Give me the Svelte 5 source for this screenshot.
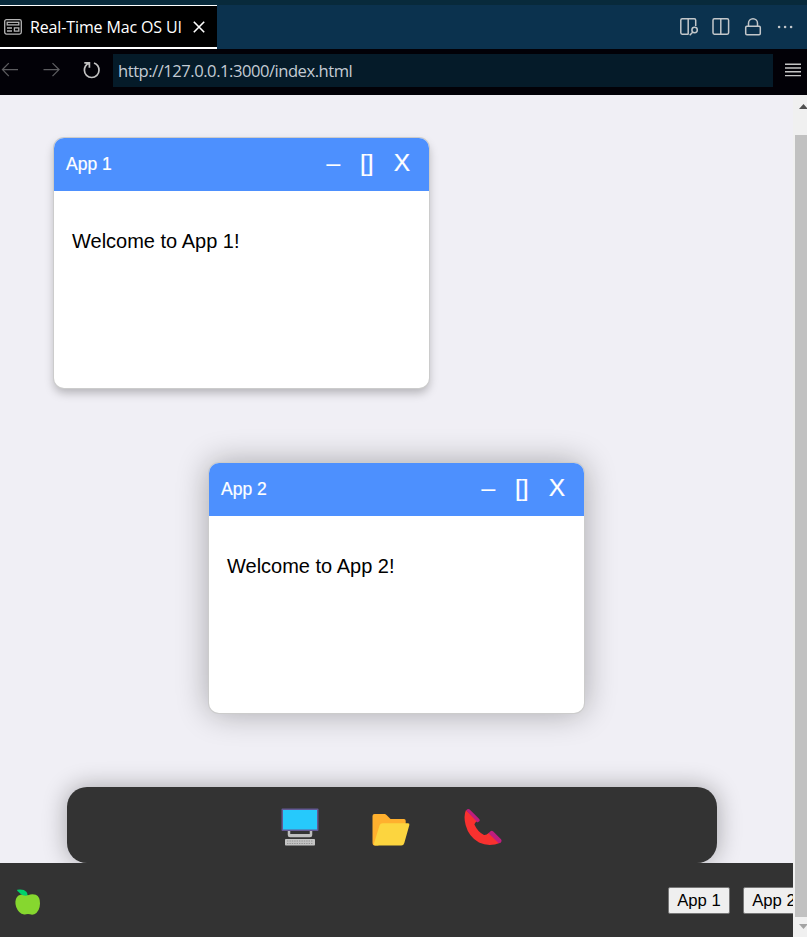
<script>
  const windows = [
    { name: 'App 1', x: 54, y: 43, active: false },
    { name: 'App 2', x: 209, y: 368, active: true }
  ];
</script>

<div class="screen">
  <div class="strip"></div>
  <div class="tabs">
    <div class="tab">
      <svg class="preview" width="18" height="16" viewBox="0 0 18 16" fill="none" stroke="#b5b5b5" stroke-width="1.3">
        <rect x=".7" y=".7" width="16.6" height="14.4" rx="1.8" />
        <rect x="3.2" y="3.3" width="11.6" height="2.6" />
        <path d="M3 9h5M3 12h5" />
        <rect x="10.4" y="8.9" width="4.4" height="3.2" />
      </svg>
      <span class="tab-title">Real-Time Mac OS UI</span>
      <svg class="close" width="12" height="12" viewBox="0 0 12 12" stroke="#fff" stroke-width="1.6"><path d="M.8.8l10.4 10.4M11.2.8L.8 11.2" /></svg>
    </div>
    <div class="actions">
      <svg width="20" height="20" viewBox="0 0 20 20" fill="none" stroke="#c3c7ca" stroke-width="1.5">
        <path d="M9.5 17.2H3.2Q1.8 17.2 1.8 15.8V3.2Q1.8 1.8 3.2 1.8H15.3Q16.7 1.8 16.7 3.2V9M9.2 1.8V17.2M10.7 18.3l3.2-3.4" />
        <circle cx="15.6" cy="13" r="2.7" />
      </svg>
      <svg width="20" height="20" viewBox="0 0 20 20" fill="none" stroke="#c3c7ca" stroke-width="1.5">
        <rect x="2" y="1.8" width="15.6" height="15.4" rx="1.4" /><path d="M9.8 1.8v15.4" />
      </svg>
      <svg width="20" height="20" viewBox="0 0 20 20" fill="none" stroke="#c3c7ca" stroke-width="1.5">
        <rect x="2.7" y="9.2" width="14.6" height="8.6" rx="1.2" /><path d="M5.5 9.2V6.2a4.5 4.5 0 0 1 9 0V9.2" />
      </svg>
      <svg width="20" height="20" viewBox="0 0 20 20" fill="#c3c7ca">
        <circle cx="4.1" cy="10" r="1.3" /><circle cx="10.1" cy="10" r="1.3" /><circle cx="16.1" cy="10" r="1.3" />
      </svg>
    </div>
  </div>

  <div class="nav">
    <svg class="arrows" width="113" height="46" viewBox="0 0 113 46" fill="none" stroke="#5c5c5f" stroke-width="1.3">
      <path d="M18 20.6H3M8.8 14.1L2.5 20.6l6.3 6.5M43.5 20.6h15M52.5 14.1l6.5 6.5-6.5 6.5" />
      <path d="M84.3 13.9h5.1v4.8M88.9 14.3Q84.4 16.4 84.4 21.2A7.3 7.3 0 0 0 99 21.2Q99 16 94 14" stroke="#c2c2c2" stroke-width="1.7" />
    </svg>
    <div class="address"><span>http://127.0.0.1:3000/index.html</span></div>
    <svg class="menu" width="16" height="14" viewBox="0 0 16 14" stroke="#c5c5c5" stroke-width="1.4"><path d="M0 1.2h16M0 5h16M0 8.8h16M0 12.6h16" /></svg>
  </div>

  <div class="viewport">
    <div class="page">
      <div class="desktop">
        {#each windows as win}
          <section class="window" class:active={win.active} style="left: {win.x}px; top: {win.y}px">
            <header>
              <span class="name">{win.name}</span>
              <div class="controls"><span class="minimize">–</span><span class="maximize">[]</span><span class="quit">X</span></div>
            </header>
            <p>Welcome to {win.name}!</p>
          </section>
        {/each}
        <div class="dock">
          <svg width="38" height="38" viewBox="0 0 38 38">
            <rect x=".5" y=".5" width="37" height="22.5" rx="1" fill="#635994" />
            <rect x="2" y="2" width="34" height="19.5" fill="#26c9fc" />
            <path d="M8 23v4q0 1 1 1h20q1 0 1-1v-4" fill="none" stroke="#bebebe" stroke-width="2.5" />
            <path d="M9 26h20v3H9z" fill="#bebebe" />
            <rect x="4" y="31" width="30" height="6.5" rx=".8" fill="#c4c4c4" />
            <path d="M6 33h26M6 35.5h26" stroke="#949494" stroke-width="1" stroke-dasharray="1.4 1" />
          </svg>
          <svg width="38" height="38" viewBox="0 0 38 38">
            <path d="M.5 8Q.5 6 2.5 6h10q1 0 2 1l4 4H32q1.7 0 1.7 1.8V21L6 37.5H2.5Q.5 37.5 .5 34.5z" fill="#ffb02e" />
            <path d="M7.5 17.5q.8-2.2 3-2.2H36q2 0 1.3 2l-5 17.7q-.7 2.5-3 2.5H3q-1.5 0-1-2z" fill="#fcd53f" />
          </svg>
          <svg width="38" height="38" viewBox="0 0 38 38">
            <path d="M2 2Q-.8 8 1.7 17.3Q4.7 28.8 15 34.6Q25 39.4 36.5 34.8L25 24.8Q22 27.5 20 27Q13.5 23.5 10.8 17.2Q9.4 15.5 13.5 12.8z" fill="#f8312f" />
            <path d="M2.2 2.3Q4 .2 5.7 1.5L15 10.8Q16.5 12.2 15 13.5L13.5 14.6zM24.5 25.2L26.5 23.3Q27.8 22 29.3 23.5L37 31.2Q38.3 33 36.6 34.7L34.7 35.3z" fill="#bf1d7e" />
          </svg>
        </div>
      </div>
      <div class="taskbar">
        <svg width="26" height="28" viewBox="0 0 26 28">
          <path d="M13 6.2Q17 4.4 20.8 5.8Q25.2 8 25 14.5Q24.8 22.5 19.3 25.3Q17 26.1 15 25.3Q13 24.7 11 25.3Q7 26.3 4.2 23.1Q0 18.2.4 12.6Q1 6.7 5.6 5.7Q9.5 4.7 13 6.2z" fill="#86d72f" />
          <path d="M2.2.7Q9-.2 11.3 2.7Q12.8 4.2 12.3 6.5Q8 7.2 5.5 4.7Q4 3 2.2 1.7z" fill="#00d26a" />
        </svg>
        <div class="buttons"><button>App 1</button><button>App 2</button></div>
      </div>
    </div>
    <div class="scrollbar">
      <svg class="up" width="12" height="40" viewBox="0 0 12 40"><path d="M4 14l4.5-5 4.5 5z" fill="#505050" /></svg>
      <div class="thumb"></div>
      <svg width="12" height="20" viewBox="0 0 12 20"><path d="M4 7h9l-4.5 5z" fill="#a3a3a3" /></svg>
    </div>
  </div>
</div>

<style>
  :global(body) { margin: 0; }
  .screen { width: 807px; height: 937px; overflow: hidden; display: flex; flex-direction: column; background: #020107; font-family: "Liberation Sans", Arial, sans-serif; }
  svg { display: block; flex: none; }
  .strip { height: 5px; flex: none; background: #082a3b; }
  .tabs { height: 44px; flex: none; display: flex; justify-content: space-between; background: #0b324e; }
  .tab { width: 217px; height: 44px; box-sizing: border-box; border-top: 1px solid #fff; border-bottom: 2px solid #fff; background: #000; display: flex; align-items: center; padding-left: 4px; color: #fff; }
  .tab-title { width: 152px; margin-left: 8px; font: 16px/22px "Open Sans", "Noto Sans", sans-serif; letter-spacing: -.13px; white-space: nowrap; }
  .close { margin-left: 11px; }
  .actions { display: flex; gap: 12px; padding: 12px 12px 0 0; }
  .nav { height: 46px; flex: none; display: flex; background: #020107; }
  .address { width: 660px; height: 33px; margin-top: 5px; background: #051b29; color: #c3cbd4; display: flex; align-items: center; padding-left: 5px; box-sizing: border-box; font: 16.6px/24px "Open Sans", "Noto Sans", sans-serif; letter-spacing: -.48px; }
  .menu { margin: 14px 0 0 12px; }
  .viewport { height: 842px; display: flex; }
  .page { width: 793px; overflow: hidden; background: #f0eff5; flex: none; }
  .desktop { height: 768px; position: relative; display: flex; flex-direction: column; justify-content: flex-end; overflow: hidden; }
  .window { position: absolute; width: 375px; height: 250px; border-radius: 10px; background: #fff; overflow: hidden; box-shadow: 0 0 0 1px #ccc, 0 5px 10px rgba(0,0,0,.25); }
  .window.active { box-shadow: 0 0 0 1px #ccc, 0 0 32px rgba(0,0,0,.32); }
  header { height: 53px; box-sizing: border-box; padding: 0 19px 0 12px; background: #4d90fe; color: #fff; display: flex; align-items: center; justify-content: space-between; }
  .name { font-size: 17.5px; -webkit-text-stroke: .2px #fff; }
  .controls { display: flex; align-items: center; font-size: 24.5px; line-height: 30px; padding-bottom: 3px; -webkit-text-stroke: .2px #fff; }
  .controls span { display: block; }
  .maximize { margin-left: 20px; }
  .quit { margin-left: 20px; }
  .window p { margin: 39px 0 0 18px; font-size: 20px; line-height: 23px; }
  .dock { width: 650px; height: 76px; box-sizing: border-box; margin-left: 67px; padding-right: 2px; border-radius: 20px; background: #333; display: flex; justify-content: center; align-items: center; gap: 53.5px; padding-top: 3px; box-shadow: 0 0 25px rgba(0,0,0,.32); }
  .taskbar { height: 74px; box-sizing: border-box; padding-left: 15px; background: #333; display: flex; align-items: center; }
  .taskbar svg { margin-top: 5px; }
  .buttons { display: flex; gap: 13px; margin: 1px 0 0 627px; flex: none; }
  button { width: 62px; height: 27px; box-sizing: border-box; padding: 0; border: 1px solid #767676; border-radius: 2px; background: #efefef; color: #000; font: 16.7px/23px "Liberation Sans", Arial, sans-serif; white-space: nowrap; }
  .scrollbar { width: 14px; box-sizing: border-box; padding-left: 2px; background: #f0f0f0; }
  .thumb { height: 782px; background: #c1c1c1; }
</style>
